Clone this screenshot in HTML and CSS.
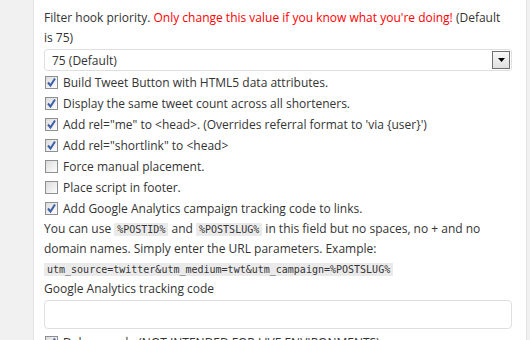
FILE: index.html
```html
<!DOCTYPE html>
<html lang="en">
<head>
  <meta charset="UTF-8" />
  <title>Tweet Button Settings</title>
  <link rel="stylesheet" href="styles.css">
</head>
<body>
  <div class="panel">
    <p class="help">Filter hook priority. <span class="warn">Only change this value if you know what you're doing!</span> (Default is 75)</p>

    <div class="select-wrap">
      <select class="select">
        <option>75 (Default)</option>
      </select>
      <span class="select-arrow">
        <svg width="7" height="4" viewBox="0 0 7 4"><path d="M0 0h7L3.5 4z" fill="#000"/></svg>
      </span>
    </div>

    <label class="check"><span class="box on"><svg width="11" height="11" viewBox="0 0 11 11"><path d="M2 5.5l2.5 3L9 1.5" fill="none" stroke="#3d5fa6" stroke-width="2"/></svg></span>Build Tweet Button with HTML5 data attributes.</label>
    <label class="check"><span class="box on"><svg width="11" height="11" viewBox="0 0 11 11"><path d="M2 5.5l2.5 3L9 1.5" fill="none" stroke="#3d5fa6" stroke-width="2"/></svg></span>Display the same tweet count across all shorteners.</label>
    <label class="check"><span class="box on"><svg width="11" height="11" viewBox="0 0 11 11"><path d="M2 5.5l2.5 3L9 1.5" fill="none" stroke="#3d5fa6" stroke-width="2"/></svg></span>Add rel="me" to &lt;head&gt;. (Overrides referral format to 'via {user}')</label>
    <label class="check"><span class="box on"><svg width="11" height="11" viewBox="0 0 11 11"><path d="M2 5.5l2.5 3L9 1.5" fill="none" stroke="#3d5fa6" stroke-width="2"/></svg></span>Add rel="shortlink" to &lt;head&gt;</label>
    <label class="check"><span class="box"></span>Force manual placement.</label>
    <label class="check"><span class="box"></span>Place script in footer.</label>
    <label class="check"><span class="box on"><svg width="11" height="11" viewBox="0 0 11 11"><path d="M2 5.5l2.5 3L9 1.5" fill="none" stroke="#3d5fa6" stroke-width="2"/></svg></span>Add Google Analytics campaign tracking code to links.</label>

    <p class="help">You can use <code>%POSTID%</code> and <code>%POSTSLUG%</code> in this field but no spaces, no + and no domain names. Simply enter the URL parameters. Example:</p>
    <p class="example"><code>utm_source=twitter&amp;utm_medium=twt&amp;utm_campaign=%POSTSLUG%</code></p>

    <p class="help">Google Analytics tracking code</p>
    <input class="text" type="text" />

    <label class="check"><span class="box on"><svg width="11" height="11" viewBox="0 0 11 11"><path d="M2 5.5l2.5 3L9 1.5" fill="none" stroke="#3d5fa6" stroke-width="2"/></svg></span>Debug mode (NOT INTENDED FOR LIVE ENVIRONMENTS)</label>
  </div>
</body>
</html>
```
FILE: styles.css
```css
* {
  margin: 0;
  padding: 0;
  box-sizing: border-box;
}
body {
  background: #f1f1f1;
  font-family: 'Open Sans', sans-serif;
  font-size: 12px;
  color: #333;
  height: 340px;
  overflow: hidden;
}
.panel {
  margin-left: 33px;
  width: 494px;
  min-height: 340px;
  background: #fff;
  border-left: 1px solid #e3e3e3;
  border-right: 1px solid #e3e3e3;
  padding: 8px 14px 0 10px;
}
.help {
  line-height: 20px;
}
.warn {
  color: #f00;
}
.select-wrap {
  position: relative;
  margin: 1px 0 1px;
}
.select {
  display: block;
  width: 100%;
  height: 22px;
  border: 1px solid #dfdfdf;
  border-radius: 3px;
  background: #fff;
  font: inherit;
  color: #333;
  padding: 0 7px;
  appearance: none;
}
.select-arrow {
  position: absolute;
  right: 2px;
  top: 2px;
  width: 18px;
  height: 18px;
  border: 1px solid #6f6f6f;
  background: linear-gradient(#f7f7f7, #e0e0e0);
  display: flex;
  align-items: center;
  justify-content: center;
}
.check {
  display: flex;
  align-items: center;
  height: 21px;
  gap: 5px;
  padding-left: 1px;
}
.box {
  width: 13px;
  height: 13px;
  border: 1px solid #8e8f8f;
  background: linear-gradient(135deg, #dcdcdc, #fdfdfd);
  display: flex;
  align-items: center;
  justify-content: center;
  flex-shrink: 0;
}
code {
  font-family: 'DejaVu Sans Mono', monospace;
  font-size: 10px;
  line-height: 14px;
  background: #eaeaea;
  padding: 1px 3px;
}
.example {
  height: 20px;
  line-height: 20px;
}
.text {
  display: block;
  width: 100%;
  height: 29px;
  border: 1px solid #dfdfdf;
  border-radius: 4px;
  margin-top: 1px;
  margin-bottom: 3px;
}
```
